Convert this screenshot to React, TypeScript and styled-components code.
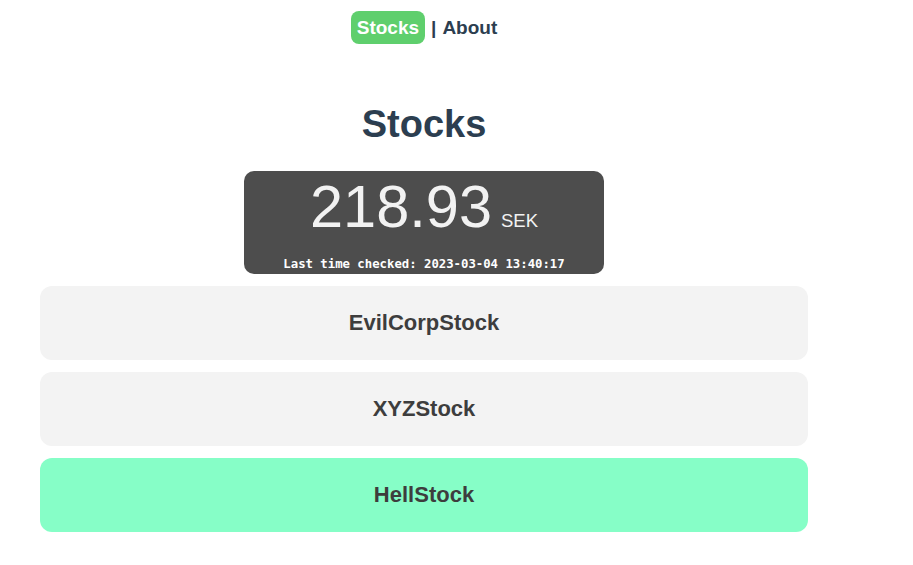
import * as React from "react";
import styled, { createGlobalStyle } from "styled-components";

const GlobalStyle = createGlobalStyle`
  html, body {
    margin: 0;
    padding: 0;
    background: #ffffff;
  }
  body {
    font-family: "Liberation Sans", Arial, Helvetica, sans-serif;
    color: #2c3e50;
  }
`;

const Page = styled.div`
  width: 768px;
  padding: 11px 40px 0;
`;

const Nav = styled.nav`
  display: flex;
  justify-content: center;
  align-items: center;
  gap: 6px;
  font-size: 19px;
  font-weight: bold;
`;

const NavLink = styled.a<{ $active?: boolean }>`
  color: ${(p) => (p.$active ? "#ffffff" : "#2c3e50")};
  background: ${(p) => (p.$active ? "#5fcf6d" : "transparent")};
  padding: ${(p) => (p.$active ? "6px 6px" : "6px 0")};
  border-radius: 8px;
  text-decoration: none;
  line-height: 21px;
  cursor: pointer;
`;

const Divider = styled.span`
  color: #2c3e50;
`;

const Title = styled.h1`
  margin: 58px 0 0;
  text-align: center;
  font-size: 38px;
  line-height: 44px;
  font-weight: bold;
  color: #2c3e50;
`;

const PriceBox = styled.div`
  width: 360px;
  height: 103px;
  margin: 25px auto 12px;
  box-sizing: border-box;
  background: #4d4d4d;
  border-radius: 10px;
  display: flex;
  flex-direction: column;
  align-items: center;
  color: #f2f2f2;
`;

const PriceRow = styled.div`
  display: flex;
  align-items: baseline;
  gap: 9px;
  margin-top: 2px;
  height: 68px;
`;

const Price = styled.span`
  font-size: 59.5px;
  line-height: 68px;
`;

const Currency = styled.span`
  font-size: 18.5px;
`;

const Checked = styled.div`
  margin-top: 16px;
  font-family: "DejaVu Sans Mono", "Liberation Mono", monospace;
  font-weight: bold;
  font-size: 12.3px;
  color: #ffffff;
`;

const StockList = styled.div`
  display: flex;
  flex-direction: column;
  gap: 12px;
`;

const StockCard = styled.div<{ $selected?: boolean }>`
  height: 74px;
  border-radius: 12px;
  background: ${(p) => (p.$selected ? "#86fec7" : "#f3f3f3")};
  display: flex;
  align-items: center;
  justify-content: center;
  font-size: 22px;
  font-weight: bold;
  color: #3d3d3d;
  cursor: pointer;
`;

const stocks = ["EvilCorpStock", "XYZStock", "HellStock"];

export default function App() {
  const [selected, setSelected] = React.useState("HellStock");
  return (
    <>
      <GlobalStyle />
      <Page>
        <Nav>
          <NavLink $active>Stocks</NavLink>
          <Divider>|</Divider>
          <NavLink>About</NavLink>
        </Nav>
        <Title>Stocks</Title>
        <PriceBox>
          <PriceRow>
            <Price>218.93</Price>
            <Currency>SEK</Currency>
          </PriceRow>
          <Checked>Last time checked: 2023-03-04 13:40:17</Checked>
        </PriceBox>
        <StockList>
          {stocks.map((s) => (
            <StockCard key={s} $selected={s === selected} onClick={() => setSelected(s)}>
              {s}
            </StockCard>
          ))}
        </StockList>
      </Page>
    </>
  );
}
